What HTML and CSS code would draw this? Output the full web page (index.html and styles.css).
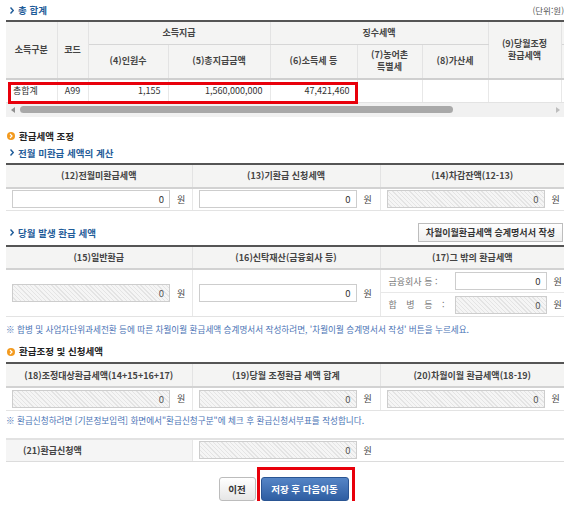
FILE: index.html
```html
<!DOCTYPE html>
<html lang="ko">
<head>
<meta charset="utf-8">
<title>환급세액 조정</title>
<link rel="stylesheet" href="styles.css">
</head>
<body>
<div class="page">
  <div class="title-row">
    <h3 class="sub-title"><svg class="chev" width="4" height="7" viewBox="0 0 4 7"><path d="M0.5 0.5 L3.2 3.5 L0.5 6.5" fill="none" stroke="#1f5c99" stroke-width="1.4"/></svg>총 합계</h3>
    <span class="unit">(단위:원)</span>
  </div>

  <div class="scroll-box">
    <div class="scroll-view">
      <table class="grid wide">
        <colgroup>
          <col class="w51"><col class="w31"><col class="w80"><col class="w102"><col class="w87"><col class="w65"><col class="w66"><col class="w73"><col class="w80">
        </colgroup>
        <thead>
          <tr class="h1">
            <th rowspan="2" class="first">소득구분</th>
            <th rowspan="2">코드</th>
            <th colspan="2">소득지급</th>
            <th colspan="3">징수세액</th>
            <th rowspan="2">(9)당월조정<br>환급세액</th>
            <th>&nbsp;</th>
          </tr>
          <tr class="h2">
            <th>(4)인원수</th>
            <th>(5)총지급금액</th>
            <th>(6)소득세 등</th>
            <th>(7)농어촌<br>특별세</th>
            <th>(8)가산세</th>
            <th>&nbsp;</th>
          </tr>
        </thead>
        <tbody>
          <tr class="data">
            <td class="left first">총합계</td>
            <td class="center">A99</td>
            <td class="num">1,155</td>
            <td class="num">1,560,000,000</td>
            <td class="num">47,421,460</td>
            <td></td>
            <td></td>
            <td></td>
            <td></td>
          </tr>
        </tbody>
      </table>
    </div>
    <div class="hscroll">
      <span class="arr-l"></span>
      <span class="thumb"></span>
      <span class="arr-r"></span>
    </div>
    <div class="mark mark-row"></div>
  </div>

  <h2 class="sec-title"><svg class="dot" width="8" height="8" viewBox="0 0 8 8"><circle cx="4" cy="4" r="4" fill="#f39a1e"/><path d="M3 2 L5 4 L3 6" fill="none" stroke="#fff" stroke-width="1.2"/></svg>환급세액 조정</h2>
  <h3 class="sub-title sub2"><svg class="chev" width="4" height="7" viewBox="0 0 4 7"><path d="M0.5 0.5 L3.2 3.5 L0.5 6.5" fill="none" stroke="#1f5c99" stroke-width="1.4"/></svg>전월 미환급 세액의 계산</h3>
  <table class="grid three">
    <thead>
      <tr><th>(12)전월미환급세액</th><th>(13)기환급 신청세액</th><th>(14)차감잔액(12-13)</th></tr>
    </thead>
    <tbody>
      <tr class="row1">
        <td><span class="field"><input class="box" value="0" readonly><span class="won">원</span></span></td>
        <td><span class="field"><input class="box" value="0" readonly><span class="won">원</span></span></td>
        <td><span class="field"><input class="box dis" value="0" readonly><span class="won">원</span></span></td>
      </tr>
    </tbody>
  </table>

  <div class="sub-row">
    <h3 class="sub-title"><svg class="chev" width="4" height="7" viewBox="0 0 4 7"><path d="M0.5 0.5 L3.2 3.5 L0.5 6.5" fill="none" stroke="#1f5c99" stroke-width="1.4"/></svg>당월 발생 환급 세액</h3>
    <button class="btn-s">차월이월환급세액 승계명서서 작성</button>
  </div>
  <table class="grid three t3">
    <thead>
      <tr><th>(15)일반환급</th><th>(16)신탁재산(금융회사 등)</th><th>(17)그 밖의 환급세액</th></tr>
    </thead>
    <tbody>
      <tr class="row2">
        <td><span class="field"><input class="box dis" value="0" readonly><span class="won">원</span></span></td>
        <td><span class="field"><input class="box" value="0" readonly><span class="won">원</span></span></td>
        <td class="split">
          <div class="sub-line first-line"><span class="lbl">금융회사 등 :</span><input class="box small" value="0" readonly><span class="won">원</span></div>
          <div class="sub-line"><span class="lbl spread">합 병 등 :</span><input class="box small dis" value="0" readonly><span class="won">원</span></div>
        </td>
      </tr>
    </tbody>
  </table>
  <p class="note">※ 합병 및 사업자단위과세전환 등에 따른 차월이월 환급세액 승계명서서 작성하려면, '차월이월 승계명서서 작성' 버튼을 누르세요.</p>

  <h2 class="sec-title sec2"><svg class="dot" width="8" height="8" viewBox="0 0 8 8"><circle cx="4" cy="4" r="4" fill="#f39a1e"/><path d="M3 2 L5 4 L3 6" fill="none" stroke="#fff" stroke-width="1.2"/></svg>환급조정 및 신청세액</h2>
  <table class="grid three">
    <thead>
      <tr><th>(18)조정대상환급세액(14+15+16+17)</th><th>(19)당월 조정환급 세액 합계</th><th>(20)차월이월 환급세액(18-19)</th></tr>
    </thead>
    <tbody>
      <tr class="row1">
        <td><span class="field"><input class="box dis" value="0" readonly><span class="won">원</span></span></td>
        <td><span class="field"><input class="box dis" value="0" readonly><span class="won">원</span></span></td>
        <td><span class="field"><input class="box dis" value="0" readonly><span class="won">원</span></span></td>
      </tr>
    </tbody>
  </table>
  <p class="note note2">※ 환급신청하려면 [기본정보입력] 화면에서"환급신청구분"에 체크 후 환급신청서부표를 작성합니다.</p>

  <table class="grid apply">
    <tbody>
      <tr>
        <th>(21)환급신청액</th>
        <td><span class="field"><input class="box dis" value="0" readonly><span class="won">원</span></span></td>
        <td class="empty"></td>
      </tr>
    </tbody>
  </table>

  <div class="actions">
    <button class="btn btn-prev">이전</button>
    <span class="save-wrap">
      <button class="btn btn-save">저장 후 다음이동</button>
      <span class="mark mark-btn"></span>
    </span>
  </div>
</div>
</body>
</html>
```
FILE: styles.css
```css
* { box-sizing: border-box; margin: 0; padding: 0; }
body {
  margin: 0;
  background: #fff;
  font-family: "Noto Sans CJK KR", "Noto Sans", sans-serif;
  font-size: 9px;
  color: #333;
}
.page {
  width: 580px;
  padding: 0 16px 0 6px;
}
.title-row {
  height: 20px;
  display: flex;
  align-items: center;
  justify-content: space-between;
}
.sub-title {
  display: flex;
  align-items: center;
  gap: 4px;
  padding-left: 4px;
  color: #1f5c99;
  font-size: 9.5px;
  font-weight: bold;
  line-height: 16px;
}
.unit {
  color: #555;
  font-size: 8.5px;
}

/* top wide table */
.scroll-box { position: relative; }
.scroll-view { overflow: hidden; width: 558px; }
.grid {
  border-collapse: collapse;
  table-layout: fixed;
  border-top: 2px solid #555;
}
.grid th {
  background: #f4f4f3;
  font-weight: bold;
  color: #444;
  text-align: center;
  line-height: 11px;
  border-right: 1px solid #e3e3e3;
  border-bottom: 1px solid #d6d6d6;
  padding: 0;
}
.grid td {
  border-right: 1px solid #e8e8e8;
  border-bottom: 1px solid #e3e3e3;
  padding: 0;
}
.wide { width: 635px; }
.w51 { width: 51px; } .w31 { width: 31px; } .w80 { width: 80px; } .w102 { width: 102px; }
.w87 { width: 87px; } .w65 { width: 65px; } .w66 { width: 66px; } .w73 { width: 73px; }
.wide th { line-height: 12px; }
.wide .h1 th { height: 23px; }
.wide .h2 th { height: 35px; border-bottom: 2px solid #cfcfcf; }
.wide th[rowspan] { border-bottom: 2px solid #cfcfcf; }
.wide .data td { height: 23px; color: #333; font-size: 9px; }
.left { text-align: left; padding-left: 7px !important; }
.center { text-align: center; }
.num { text-align: right; padding-right: 7px !important; }

.hscroll {
  height: 14px;
  background: #f1f1f1;
  position: relative;
  display: flex;
  align-items: center;
}
.arr-l, .arr-r {
  width: 0; height: 0;
  border-top: 3px solid transparent;
  border-bottom: 3px solid transparent;
}
.arr-l { border-right: 4px solid #8f8f8f; margin-left: 5px; }
.arr-r { border-left: 4px solid #bdbdbd; margin-left: auto; margin-right: 4px; }
.thumb {
  width: 433px;
  height: 7px;
  border-radius: 4px;
  background: #a9a9a9;
  margin-left: 5px;
}
.mark {
  position: absolute;
  border: 3px solid #e8000b;
  pointer-events: none;
}
.mark-row { left: 2px; top: 62px; width: 350px; height: 22px; }

/* sections */
.sec-title {
  display: flex;
  align-items: center;
  gap: 4px;
  padding-left: 1px;
  margin-top: 11px;
  font-size: 9.5px;
  font-weight: bold;
  color: #222;
  line-height: 17px;
}
.sec2 { margin-top: 8px; }
.sub2 { margin-top: 0; }
.three { width: 558px; margin-top: 2px; }
.three th { height: 24px; border-bottom: 2px solid #d2d2d2; }
.three th:last-child, .three td:last-child { border-right: none; }
.three th:nth-child(1) { width: 186px; }
.three th:nth-child(2) { width: 188px; }
.three .row1 td { height: 23px; }
.field {
  display: flex;
  align-items: center;
  padding-left: 6px;
  gap: 7px;
}
.box {
  width: 158px;
  height: 18px;
  border: 1px solid #cdcdcd;
  background: #fff;
  font: inherit;
  font-size: 9.5px;
  color: #333;
  text-align: right;
  padding: 0 5px 0 0;
  outline: none;
}
.box.dis {
  background: repeating-linear-gradient(45deg, #f5f5f5 0 2px, #e4e4e4 2px 3px);
  color: #555;
}
.box.small { width: 92px; }
.won { color: #444; font-size: 9px; }

.sub-row {
  display: flex;
  align-items: center;
  justify-content: space-between;
  margin-top: 11px;
  height: 21px;
}
.btn-s {
  height: 19px;
  padding: 0 7px;
  border: 1px solid #bdbdbd;
  background: linear-gradient(#ffffff, #efefef);
  font: inherit;
  font-size: 9px;
  font-weight: bold;
  color: #333;
  margin-right: 1px;
}
.t3 { margin-top: 2px; }
.t3 th { height: 23px; }
.row2 td { height: 47px; }
.split { padding: 0 !important; }
.sub-line {
  height: 23px;
  display: flex;
  align-items: center;
  padding-left: 8px;
  gap: 5px;
}
.first-line { border-bottom: 1px solid #e8e8e8; }
.sub-line .lbl {
  width: 61px;
  color: #777;
  font-size: 9px;
}
.sub-line .lbl.spread {
  width: 56px;
  margin-right: 5px;
  text-align: justify;
  text-align-last: justify;
}
.sub-line .won { margin-left: 2px; }

.note {
  color: #4a73b5;
  font-size: 8.6px;
  line-height: 12px;
  margin-top: 6px;
  white-space: nowrap;
}
.note2 { margin-top: 3px; }

.apply {
  width: 558px;
  margin-top: 12px;
  border-top: 2px solid #e2e2e2;
}
.apply th {
  width: 186px;
  height: 23px;
  text-align: left;
  padding-left: 17px;
  background: #f5f5f5;
  border-bottom: 1px solid #dcdcdc;
  border-right: 1px solid #e6e6e6;
}
.apply td { border-right: none; border-bottom: 1px solid #dcdcdc; }
.apply td:nth-child(2) { width: 188px; }

.actions {
  display: flex;
  justify-content: center;
  gap: 5px;
  margin-top: 15px;
  padding-right: 3px;
}
.btn {
  height: 24px;
  font: inherit;
  font-size: 9.5px;
  font-weight: bold;
  border-radius: 3px;
}
.btn-prev {
  width: 37px;
  border: 1px solid #bcbcbc;
  background: linear-gradient(#ffffff, #e6e6e6);
  color: #333;
}
.save-wrap { position: relative; display: inline-block; }
.btn-save {
  width: 88px;
  border: 1px solid #2a5593;
  background: linear-gradient(#5585c6, #2f5ea2);
  color: #fff;
  display: block;
}
.mark-btn { left: -4px; top: -10px; width: 98px; height: 42px; }
```
